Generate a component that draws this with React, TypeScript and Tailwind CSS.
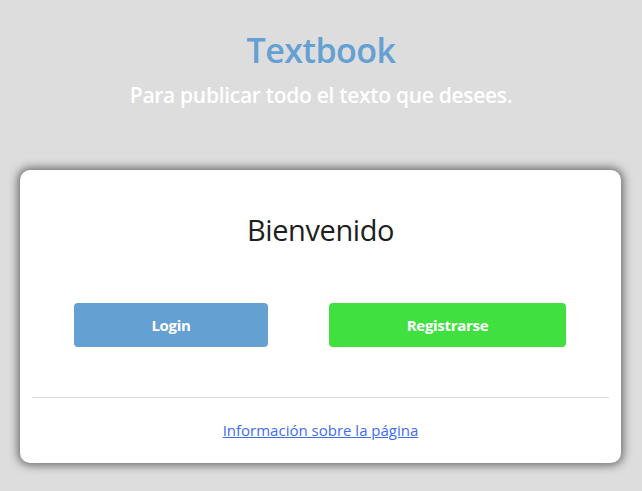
export default function App() {
  return (
    <div
      className="min-h-screen bg-[#dddddd] px-[20px] pt-[28px]"
      style={{ fontFamily: '"Open Sans", "Noto Sans", sans-serif' }}
    >
      {/* Header */}
      <div className="text-center">
        <h1 className="text-[34px] leading-[44px] font-semibold text-[#64a0d2] tracking-[-0.5px]">Textbook</h1>
        <p className="mt-[9px] text-[21px] leading-[28px] font-semibold text-white tracking-[-0.3px]">
          Para publicar todo el texto que desees.
        </p>
      </div>

      {/* Card */}
      <div className="mt-[61px] w-[601px] bg-white rounded-[10px] shadow-[0_0_10px_2px_rgba(0,0,0,0.55)] px-[12px]">
        <h2 className="pt-[42px] text-center text-[29px] leading-[36px] font-medium text-[#1e1e1e] tracking-[-0.4px]">
          Bienvenido
        </h2>

        <div className="mt-[55px] flex">
          <button className="ml-[42px] w-[194px] h-[44px] rounded-[4px] bg-[#64a0d2] text-white text-[15px] font-bold tracking-[-0.3px]">
            Login
          </button>
          <button className="ml-[61px] w-[237px] h-[44px] rounded-[4px] bg-[#40e040] text-white text-[15px] font-bold tracking-[-0.3px]">
            Registrarse
          </button>
        </div>

        <hr className="mt-[50px] border-t border-[#dddddd]" />

        <div className="pt-[20px] pb-[21px] text-center">
          <a href="#" className="text-[15px] leading-[22px] text-[#3f6cf0] underline">
            Información sobre la página
          </a>
        </div>
      </div>
    </div>
  );
}
